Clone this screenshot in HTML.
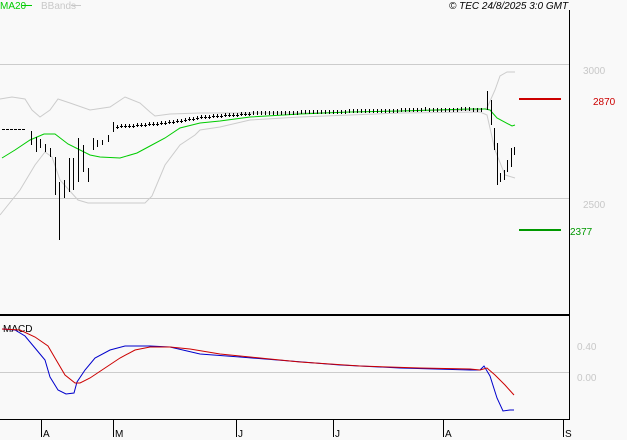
<!DOCTYPE html>
<html><head><style>
html,body{margin:0;padding:0;background:#f9f9f9;}
svg{display:block;font-family:"Liberation Sans",sans-serif;}
</style></head><body>
<svg width="627" height="440" viewBox="0 0 627 440" xmlns="http://www.w3.org/2000/svg">
<rect width="627" height="440" fill="#f9f9f9"/>
<text x="0" y="9" font-size="10" fill="#00cc00">MA20</text>
<line x1="22" y1="5.5" x2="32" y2="5.5" stroke="#00cc00"/>
<text x="41" y="9" font-size="10" fill="#c8c8c8">BBands</text>
<line x1="71" y1="5.5" x2="81" y2="5.5" stroke="#c8c8c8"/>
<text x="449" y="9" font-size="10" font-style="italic" fill="#000">© TEC 24/8/2025 3:0 GMT</text>
<g stroke="#cccccc" stroke-width="1" fill="none">
<line x1="0" y1="64.5" x2="569" y2="64.5"/>
<line x1="0" y1="198.5" x2="569" y2="198.5"/>
<line x1="0" y1="372.5" x2="569" y2="372.5"/>
<polyline points="0,99 12,97 25,99 32,110 40,117 50,110 58,99 70,103 90,110 110,107 125,97 140,103 150,112 155,116 170,114 200,113 300,113 400,111 480,110 487,108 495,90 500,76 507,72 515,72"/>
<polyline points="0,215 20,190 35,165 45,152 52,157 60,180 78,200 88,203 120,203 145,203 152,196 165,165 180,145 195,135 200,130 220,127 250,120 300,117 400,113 480,112 487,115 495,150 505,175 515,178"/>
</g>
<polyline fill="none" stroke="#00cc00" stroke-width="1" points="2,158 15,150 30,140 44,134 55,134 68,144 90,155 100,157 120,158 137,153 150,146 165,138 180,128 200,123 220,121 250,117 300,114 350,112 400,111 470,109 485,109 490,110 497,118 512,126 515,125"/>
<g stroke="#000" stroke-width="1" fill="none">
<path d="M31.5,131V145M36.5,137V152M40.5,139V148M45.5,144V152M50.5,148V157M55.5,157V195M59.5,182V240M64.5,180V198M69.5,158V192M73.5,158V190M78.5,138V182M83.5,145V172M88.5,168V182M93.5,138V150M97.5,140V147M102.5,140V145M108.5,135V142M113.5,122V132M487.5,91V110M491.5,100V125M494.5,128V150M497.5,143V185M500.5,173V182M504.5,170V180M507.5,160V172M511.5,148V167M514.5,147V155"/>
<path d="M2,129.5h3M6,129.5h3M10,129.5h3M14,129.5h3M18,129.5h3M22,129.5h3"/>
<path d="M117.5,125v4M121.5,124v4M125.5,124v4M129.5,124v4M133.5,124v4M137.5,123v4M141.5,123v4M145.5,123v4M149.5,122v4M153.5,122v4M157.5,122v4M161.5,121v4M165.5,121v4M169.5,120v4M173.5,120v4M177.5,119v4M181.5,119v4M185.5,118v4M189.5,117v4M193.5,117v4M197.5,116v4M201.5,115v4M205.5,115v4M209.5,115v4M213.5,114v4M217.5,114v4M221.5,114v4M225.5,113v4M229.5,113v4M233.5,113v4M237.5,113v4M241.5,112v4M245.5,112v4M249.5,112v4M253.5,111v4M257.5,111v4M261.5,111v4M265.5,111v4M269.5,111v4M273.5,111v4M277.5,111v4M281.5,111v4M285.5,111v4M289.5,111v4M293.5,111v4M297.5,111v4M301.5,110v4M305.5,110v4M309.5,110v4M313.5,110v4M317.5,110v4M321.5,110v4M325.5,110v4M329.5,110v4M333.5,110v4M337.5,110v4M341.5,110v4M345.5,110v4M349.5,109v4M353.5,109v4M357.5,109v4M361.5,109v4M365.5,109v4M369.5,109v4M373.5,109v4M377.5,109v4M381.5,109v4M385.5,109v4M389.5,109v4M393.5,109v4M397.5,109v4M401.5,108v4M405.5,108v4M409.5,108v4M413.5,108v4M417.5,108v4M421.5,108v4M425.5,107v4M429.5,108v4M433.5,108v4M437.5,108v4M441.5,108v4M445.5,108v4M449.5,108v4M453.5,108v4M457.5,108v4M461.5,107v4M465.5,107v4M469.5,107v4M473.5,108v4M477.5,108v4M481.5,108v4"/>
<path d="M116,127.5h3M120,126.5h3M124,126.5h3M128,126.5h3M132,126.5h3M136,125.5h3M140,125.5h3M144,125.5h3M148,124.5h3M152,124.5h3M156,124.5h3M160,123.5h3M164,123.5h3M168,122.5h3M172,122.5h3M176,121.5h3M180,121.5h3M184,120.5h3M188,119.5h3M192,119.5h3M196,118.5h3M200,117.5h3M204,117.5h3M208,117.5h3M212,116.5h3M216,116.5h3M220,116.5h3M224,115.5h3M228,115.5h3M232,115.5h3M236,115.5h3M240,114.5h3M244,114.5h3M248,114.5h3"/>
</g>
<line x1="569.5" y1="10" x2="569.5" y2="420" stroke="#000"/>
<line x1="0" y1="315" x2="569" y2="315" stroke="#000" stroke-width="2"/>
<line x1="0" y1="419.5" x2="570" y2="419.5" stroke="#000"/>
<g stroke="#000"><line x1="41.5" y1="419" x2="41.5" y2="437"/><line x1="113.5" y1="419" x2="113.5" y2="437"/><line x1="236.5" y1="419" x2="236.5" y2="437"/><line x1="333.5" y1="419" x2="333.5" y2="437"/><line x1="443.5" y1="419" x2="443.5" y2="437"/><line x1="563.5" y1="419" x2="563.5" y2="437"/></g>
<g font-size="10" fill="#000"><text x="43" y="437">A</text><text x="115" y="437">M</text><text x="238" y="437">J</text><text x="335" y="437">J</text><text x="445" y="437">A</text><text x="565" y="437">S</text></g>
<line x1="519" y1="99" x2="561" y2="99" stroke="#cc0000" stroke-width="2"/>
<line x1="519" y1="230" x2="561" y2="230" stroke="#009900" stroke-width="2"/>
<g font-size="10">
<text x="583" y="74" fill="#c8c8c8">3000</text>
<text x="593" y="105" fill="#cc0000">2870</text>
<text x="583" y="208" fill="#c8c8c8">2500</text>
<text x="570" y="235" fill="#009900">2377</text>
<text x="577" y="350" fill="#c8c8c8">0.40</text>
<text x="577" y="381" fill="#c8c8c8">0.00</text>
<text x="3" y="332" fill="#000">MACD</text>
</g>
<polyline fill="none" stroke="#0000cc" points="2,329 15,330 25,336 35,348 45,360 50,377 58,390 66,394 74,393 77,382 85,370 95,358 110,350 125,346 150,346 170,347 200,354 240,357 290,361 340,365 400,368 470,370 480,370 484,366 490,376 497,398 503,411 510,410 514,410"/>
<polyline fill="none" stroke="#cc0000" points="2,329 20,330 35,337 48,346 55,358 65,375 75,383 80,383 90,378 105,368 120,358 135,350 150,347 170,347 190,349 220,354 260,358 300,362 360,366 420,368 470,369 480,370 487,368 495,375 505,385 514,395"/>
</svg>
</body></html>
